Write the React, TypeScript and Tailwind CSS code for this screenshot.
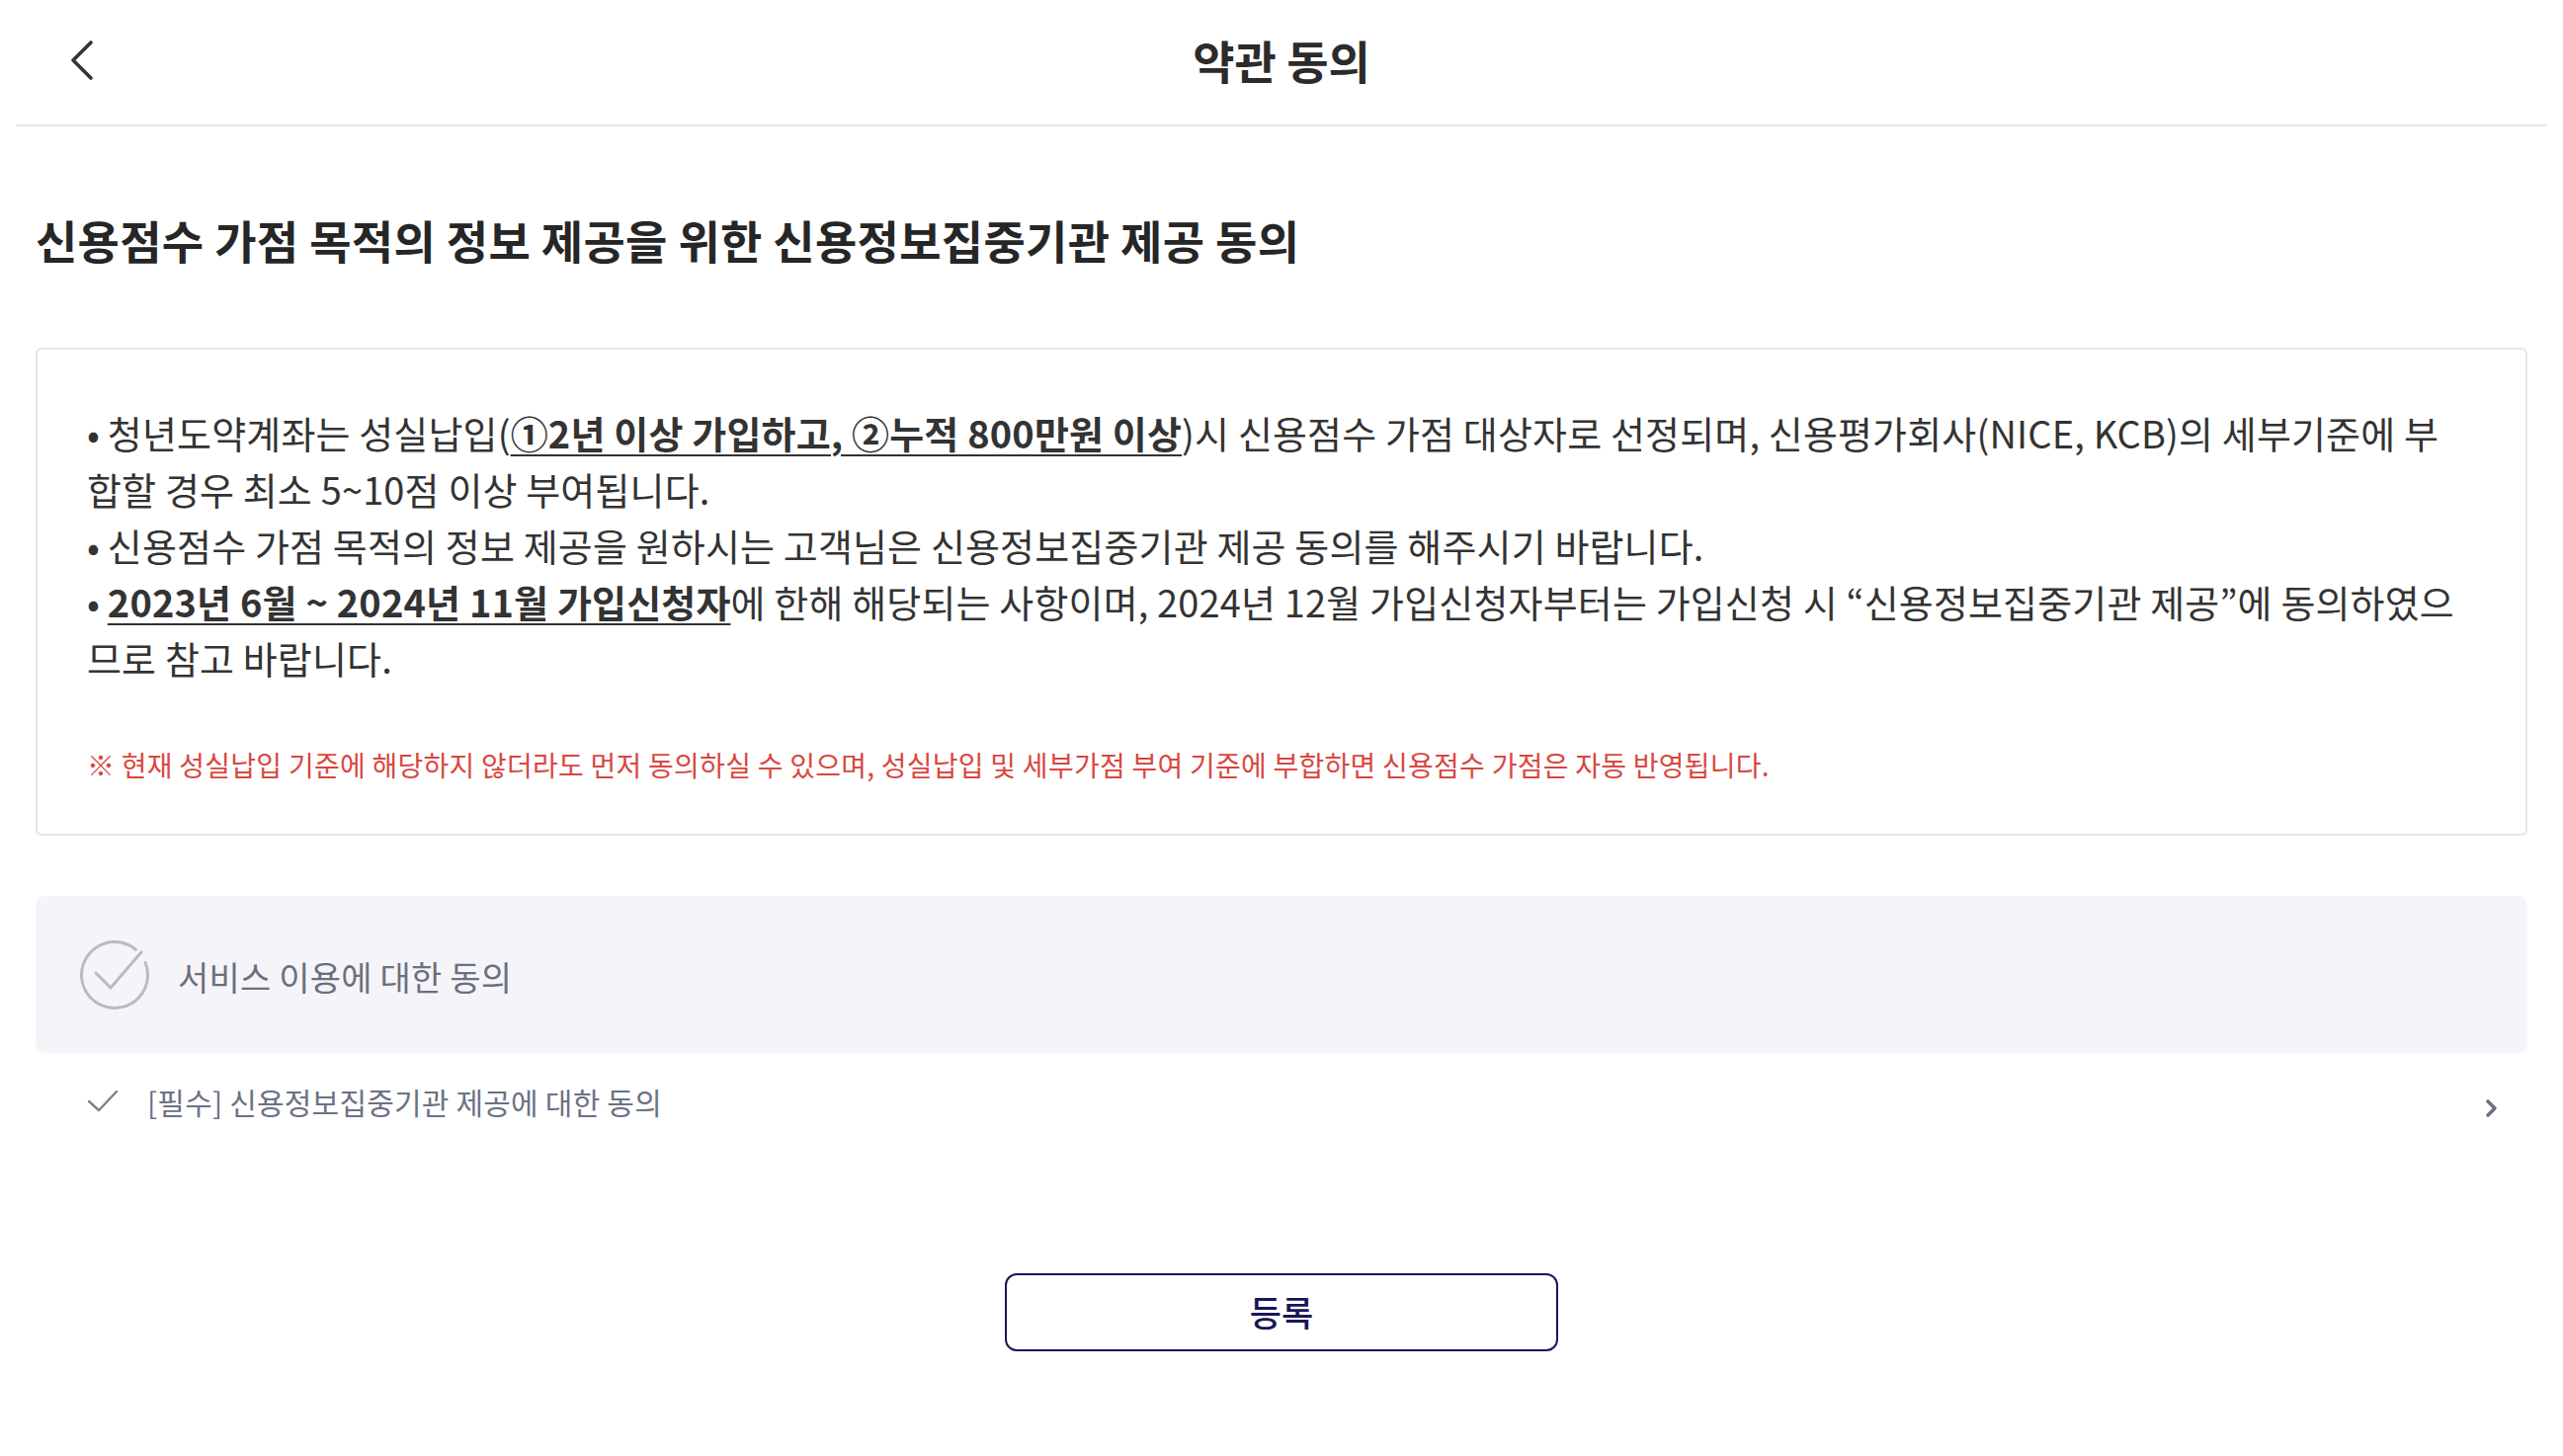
import React from "react";

const U = ({ children }: { children: React.ReactNode }) => (
  <span className="font-bold underline decoration-[2px] underline-offset-[6px]">{children}</span>
);

export default function App() {
  return (
    <div className="min-h-screen bg-white font-['Noto_Sans_CJK_KR','Noto_Sans',sans-serif] text-[#2e2e2e]">
      <header className="relative mx-4 flex h-[128px] items-center justify-center border-b-2 border-[#e8e8e8] pb-[6px]">
        <button className="absolute left-[53px] top-[39px] flex h-[44px] w-[28px] items-center justify-center">
          <svg width="26" height="42" viewBox="0 0 26 42" fill="none">
            <path d="M22 3 L4 21 L22 39" stroke="#333" strokeWidth="3.6" strokeLinecap="round" strokeLinejoin="round" />
          </svg>
        </button>
        <h1 className="text-[46px] font-bold leading-none text-[#2b2b2b]">약관 동의</h1>
      </header>

      <main className="px-9">
        <h2 className="mt-[86px] text-[46px] font-bold leading-[56px] text-[#262626] tracking-[0.3px]">
          신용점수 가점 목적의 정보 제공을 위한 신용정보집중기관 제공 동의
        </h2>

        <section className="mt-[82px] rounded-[6px] border-2 border-[#e6e6e6] pb-[50px] pl-[50px] pr-[62px] pt-[55px]">
          <div className="break-all text-[38px] leading-[57px] text-[#333] tracking-[0.15px]">
            <p>
              •{"\u2009"}청년도약계좌는 성실납입(<U>①2년 이상 가입하고, ②누적 800만원 이상</U>)시 신용점수 가점 대상자로 선정되며, 신용평가회사(NICE, KCB)의 세부기준에 부합할 경우 최소 5~10점 이상 부여됩니다.
            </p>
            <p>•{"\u2009"}신용점수 가점 목적의 정보 제공을 원하시는 고객님은 신용정보집중기관 제공 동의를 해주시기 바랍니다.</p>
            <p>
              •{"\u2009"}<U>2023년 6월 ~ 2024년 11월 가입신청자</U>에 한해 해당되는 사항이며, 2024년 12월 가입신청자부터는 가입신청 시 “신용정보집중기관 제공”에 동의하였으므로 참고 바랍니다.
            </p>
          </div>
          <p className="mt-[60px] text-[28px] leading-[40px] text-[#d8473f] tracking-[0.25px]">
            ※ 현재 성실납입 기준에 해당하지 않더라도 먼저 동의하실 수 있으며, 성실납입 및 세부가점 부여 기준에 부합하면 신용점수 가점은 자동 반영됩니다.
          </p>
        </section>

        <div className="mt-[61px] flex h-[159px] items-center gap-[29px] rounded-[10px] bg-[#f5f5f9] pl-[45px]">
          <svg width="70" height="70" viewBox="0 0 70 70" fill="none">
            <path d="M66.06 22.45 A33.5 33.5 0 1 1 56.53 9.34" stroke="#babac6" strokeWidth="3" strokeLinecap="round" />
            <path d="M16 33 L31 48 L62 12" stroke="#babac6" strokeWidth="3" strokeLinecap="round" strokeLinejoin="round" />
          </svg>
          <span className="mt-[4px] text-[34px] leading-none text-[#6c6f80] tracking-[0.2px]">서비스 이용에 대한 동의</span>
        </div>

        <div className="flex h-[98px] items-center pl-[52px] pr-[28px]">
          <svg width="32" height="24" viewBox="0 0 32 24" fill="none">
            <path d="M2 12 L12 21 L30 2" stroke="#7b8090" strokeWidth="2.4" strokeLinecap="round" strokeLinejoin="round" />
          </svg>
          <span className="ml-[29px] text-[30px] leading-none text-[#6b7284] tracking-[0.2px]">[필수] 신용정보집중기관 제공에 대한 동의</span>
          <svg className="ml-auto mt-[14px]" width="16" height="22" viewBox="0 0 16 22" fill="none">
            <path d="M4 4 L11 11 L4 18" stroke="#6b7280" strokeWidth="3.6" strokeLinecap="round" strokeLinejoin="round" />
          </svg>
        </div>

        <div className="mt-[125px] flex justify-center">
          <button className="flex h-[79px] w-[560px] items-center justify-center rounded-[12px] border-2 border-[#17175a] text-[35px] font-medium text-[#17175a]">
            등록
          </button>
        </div>
      </main>
    </div>
  );
}
